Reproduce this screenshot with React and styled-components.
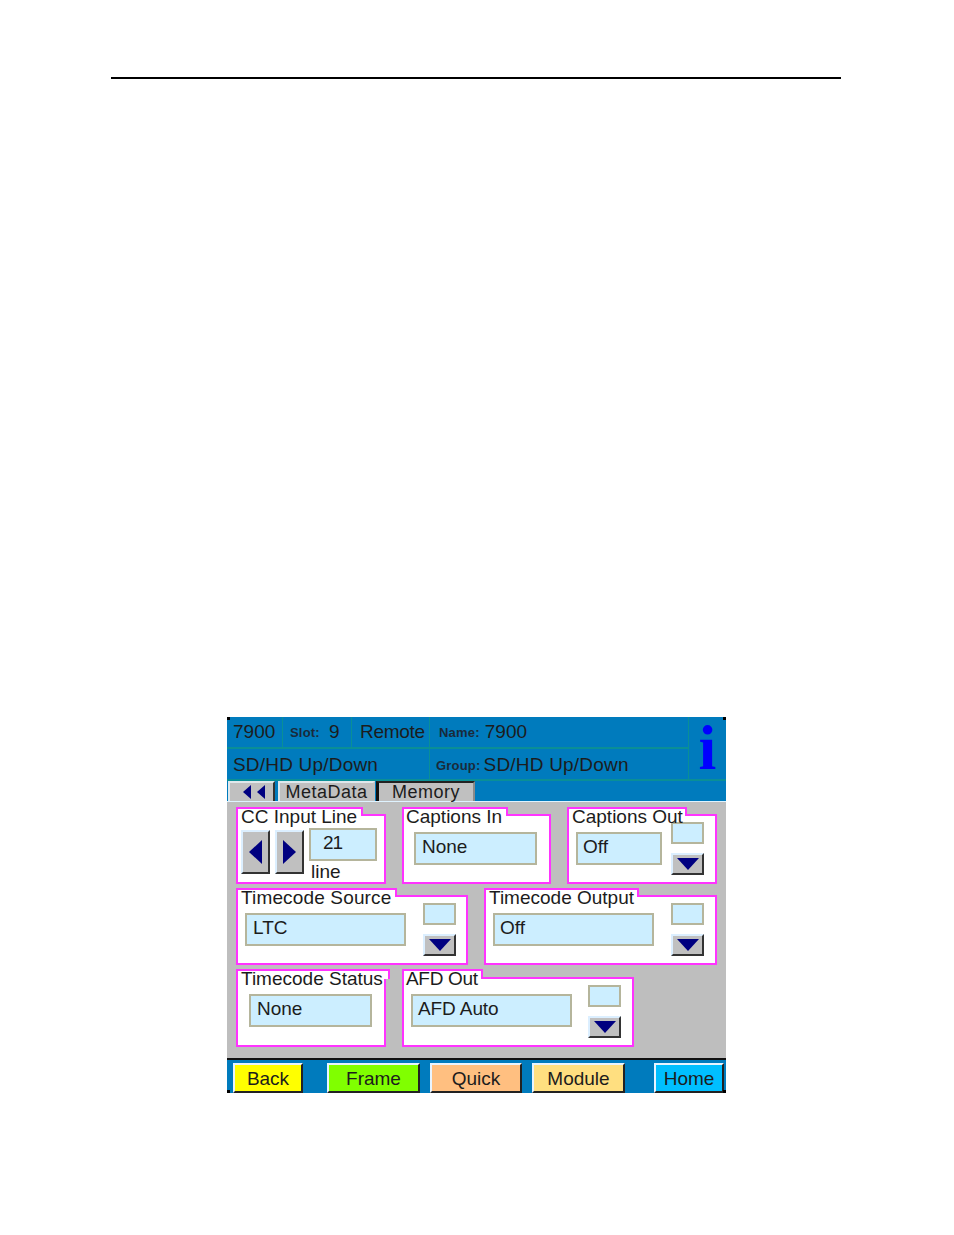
import React from "react";
import styled, { createGlobalStyle } from "styled-components";

const Global = createGlobalStyle`
  html, body {
    margin: 0;
    background: #fff;
    font-family: "Liberation Sans", Arial, sans-serif;
    color: #1c1c1c;
  }
`;

const Page = styled.div`
  width: 954px;
  height: 1235px;
  padding-top: 77px;
  box-sizing: border-box;
  overflow: hidden;
`;

const Rule = styled.hr`
  width: 730px;
  height: 2px;
  margin: 0 0 638px 111px;
  border: none;
  background: #000;
`;

const Panel = styled.div`
  position: relative;
  width: 499px;
  height: 376px;
  margin-left: 227px;
  display: flex;
  flex-direction: column;
  background: #007bbd;
`;

const Corner = styled.span`
  position: absolute;
  width: 3px;
  height: 3px;
  background: #000;
  ${(p) => (p.$at === "tr" ? "top: 0; right: 0;" : "")}
  ${(p) => (p.$at === "tl" ? "top: 0; left: 0;" : "")}
  ${(p) => (p.$at === "bl" ? "bottom: 0; left: 0;" : "")}
  ${(p) => (p.$at === "br" ? "bottom: 0; right: 0;" : "")}
`;

const Header = styled.div`
  display: grid;
  grid-template-columns: 56px 69px 78px 259px 37px;
  grid-template-rows: 32px 32px;
`;

const Cell = styled.div`
  grid-column: ${(p) => p.$span || "auto"};
  grid-row: ${(p) => p.$row || "auto"};
  display: flex;
  align-items: center;
  padding-left: ${(p) => p.$inset || 6}px;
  padding-top: ${(p) => (p.$row ? 1 : 0)}px;
  padding-bottom: ${(p) => (p.$row ? 0 : 1)}px;
  box-sizing: border-box;
  border-right: 1px solid #0a8f96;
  border-bottom: 2px solid #0a8f96;
  font-size: 19px;
  letter-spacing: ${(p) => p.$track || 0}px;
  white-space: nowrap;
`;

const Small = styled.span`
  font-size: 13px;
  font-weight: 700;
  letter-spacing: 0.2px;
  margin-right: ${(p) => p.$gap || 3}px;
  margin-top: 2px;
  color: #1a2a3a;
`;

const InfoCell = styled.div`
  grid-column: 5;
  grid-row: 1 / span 2;
  display: flex;
  justify-content: center;
  align-items: center;
  border-bottom: 2px solid #0a8f96;
  font-family: "Liberation Serif", serif;
  font-weight: 700;
  font-size: 64px;
  line-height: 1;
  color: #0000ff;
`;

const TabBar = styled.div`
  height: 21px;
  display: flex;
  align-items: flex-start;
  padding-left: 1px;
  box-sizing: border-box;
  border-bottom: 1px solid #dff3ff;
`;

const Tab = styled.button`
  width: ${(p) => p.$w}px;
  margin-right: ${(p) => p.$gap}px;
  height: 20px;
  padding: 0 0 0 ${(p) => p.$pad || 0}px;
  display: flex;
  align-items: center;
  justify-content: center;
  gap: 6px;
  box-sizing: border-box;
  border: none;
  border-left: ${(p) => (p.$active ? "3px solid #111" : "2px solid #dfe8ec")};
  border-top: 2px solid ${(p) => (p.$active ? "#222" : "#dfe8ec")};
  border-right: 2px solid ${(p) => p.$edge || "#c0c0c0"};
  background: #c0c0c0;
  font-family: inherit;
  font-size: 18px;
  letter-spacing: 0.5px;
  color: #1c1c1c;
`;

const Content = styled.div`
  flex: 1;
  background: #bebebe;
  padding: 5px 0 0 9px;
  display: flex;
  flex-direction: column;
  gap: 4px;
`;

const Row = styled.div`
  display: flex;
  gap: 16px;
`;

const Group = styled.section`
  width: ${(p) => p.$w}px;
  display: flex;
  flex-direction: column;
`;

const Legend = styled.h3`
  position: relative;
  z-index: 1;
  width: ${(p) => p.$w}px;
  height: ${(p) => (p.$tall ? 10 : 9)}px;
  margin: 0 0 -2px;
  box-sizing: border-box;
  background: #fff;
  border: 2px solid #ff33ff;
  border-bottom: none;
  font-weight: 400;
  font-size: 19px;
  line-height: 16px;
  padding-left: ${(p) => p.$pad || 3}px;
  letter-spacing: ${(p) => p.$track || 0}px;
  white-space: nowrap;
`;

const Body = styled.div`
  position: relative;
  height: 70px;
  box-sizing: border-box;
  background: #fff;
  border: 2px solid #ff33ff;
  display: flex;
  align-items: flex-start;
  padding-left: ${(p) => p.$inset}px;
`;

const Field = styled.div`
  width: ${(p) => p.$w}px;
  height: 33px;
  margin-top: ${(p) => (p.$top === undefined ? 16 : p.$top)}px;
  box-sizing: border-box;
  background: #cceeff;
  border: 2px solid #b5b59c;
  padding-left: ${(p) => p.$pad || 6}px;
  font-size: 19px;
  line-height: 26px;
  letter-spacing: ${(p) => p.$track || 0}px;
`;

const Stepper = styled.div`
  margin-left: auto;
  margin-right: ${(p) => p.$right || 11}px;
  margin-top: 6px;
  display: flex;
  flex-direction: column;
  gap: 9px;
`;

const Swatch = styled.div`
  width: 33px;
  height: 22px;
  box-sizing: border-box;
  background: #cceeff;
  border: 2px solid #b5b59c;
`;

const Bevel = styled.button`
  width: ${(p) => p.$w}px;
  height: ${(p) => p.$h}px;
  padding: 0;
  display: flex;
  align-items: center;
  justify-content: center;
  box-sizing: border-box;
  border: 2px solid;
  border-color: #dcefff #333 #333 #dcefff;
  background: #c0c0c0;
`;

const Spin = styled.div`
  display: flex;
  gap: 5px;
  margin-left: 3px;
  margin-top: 14px;
`;

const LineColumn = styled.div`
  margin-left: 5px;
  margin-top: 12px;
  display: flex;
  flex-direction: column;
  font-size: 19px;
`;

const LineLabel = styled.span`
  padding-left: 2px;
  line-height: 21px;
`;

const Footer = styled.div`
  height: 35px;
  box-sizing: border-box;
  border-top: 2px solid #111;
  padding: 3px 0 0 6px;
  display: flex;
  background: #007bbd;
`;

const NavButton = styled.button`
  width: ${(p) => p.$w}px;
  margin-right: ${(p) => p.$gap || 0}px;
  height: 30px;
  padding: 1px 0 0;
  box-sizing: border-box;
  border: 2px solid;
  border-color: #e8f4ff #222 #222 #e8f4ff;
  background: ${(p) => p.$color};
  font-family: inherit;
  font-size: 19px;
  color: #1c1c1c;
`;

const Triangle = ({ dir, w, h }) => {
  const points = {
    left: `${w},0 ${w},${h} 0,${h / 2}`,
    right: `0,0 0,${h} ${w},${h / 2}`,
    down: `0,0 ${w},0 ${w / 2},${h}`,
  };
  return (
    <svg width={w} height={h} viewBox={`0 0 ${w} ${h}`}>
      <polygon points={points[dir]} fill="#000080" />
    </svg>
  );
};

const Arrows = ({ right }) => (
  <Stepper $right={right}>
    <Swatch />
    <Bevel $w={33} $h={22}>
      <Triangle dir="down" w={22} h={12} />
    </Bevel>
  </Stepper>
);

export default function App() {
  return (
    <Page>
      <Global />
      <Rule />
      <Panel>
        <Corner $at="tl" />
        <Corner $at="tr" />
        <Corner $at="bl" />
        <Corner $at="br" />
        <Header>
          <Cell>7900</Cell>
          <Cell $inset={7}>
            <Small $gap={9}>Slot:</Small>9
          </Cell>
          <Cell $inset={8} $track={-0.3}>Remote</Cell>
          <Cell $inset={9}>
            <Small $gap={5}>Name:</Small>7900
          </Cell>
          <InfoCell>i</InfoCell>
          <Cell $span="1 / span 3" $row="2" $track={0.2}>
            SD/HD Up/Down
          </Cell>
          <Cell $row="2" $inset={6} $track={0.2}>
            <Small>Group:</Small>SD/HD Up/Down
          </Cell>
        </Header>
        <TabBar>
          <Tab $w={47} $gap={3} $pad={5} $edge="#333">
            <Triangle dir="left" w={8} h={14} />
            <Triangle dir="left" w={8} h={14} />
          </Tab>
          <Tab $w={97} $gap={1}>MetaData</Tab>
          <Tab $w={99} $gap={0} $edge="#8a8a8a" $active>Memory</Tab>
        </TabBar>
        <Content>
          <Row>
            <Group $w={150}>
              <Legend $w={127}>CC Input Line</Legend>
              <Body $inset={0}>
                <Spin>
                  <Bevel $w={29} $h={44}>
                    <Triangle dir="left" w={13} h={24} />
                  </Bevel>
                  <Bevel $w={29} $h={44}>
                    <Triangle dir="right" w={13} h={24} />
                  </Bevel>
                </Spin>
                <LineColumn>
                  <Field $w={68} $top={0} $pad={12} $track={-1}>21</Field>
                  <LineLabel>line</LineLabel>
                </LineColumn>
              </Body>
            </Group>
            <Group $w={149}>
              <Legend $w={106} $pad={2}>Captions In</Legend>
              <Body $inset={10}>
                <Field $w={123}>None</Field>
              </Body>
            </Group>
            <Group $w={150}>
              <Legend $w={120}>Captions Out</Legend>
              <Body $inset={7}>
                <Field $w={86} $pad={5}>Off</Field>
                <Arrows />
              </Body>
            </Group>
          </Row>
          <Row>
            <Group $w={232}>
              <Legend $w={161} $track={0.15}>Timecode Source</Legend>
              <Body $inset={7}>
                <Field $w={161}>LTC</Field>
                <Arrows right={10} />
              </Body>
            </Group>
            <Group $w={233}>
              <Legend $w={155}>Timecode Output</Legend>
              <Body $inset={7}>
                <Field $w={161} $pad={5}>Off</Field>
                <Arrows />
              </Body>
            </Group>
          </Row>
          <Row>
            <Group $w={150}>
              <Legend $w={154} $tall>Timecode Status</Legend>
              <Body $inset={11}>
                <Field $w={123} $top={15}>None</Field>
              </Body>
            </Group>
            <Group $w={232}>
              <Legend $w={81} $tall $pad={2} $track={-0.3}>AFD Out</Legend>
              <Body $inset={7}>
                <Field $w={161} $top={15} $pad={5} $track={-0.1}>AFD Auto</Field>
                <Arrows />
              </Body>
            </Group>
          </Row>
        </Content>
        <Footer>
          <NavButton $w={70} $gap={24} $color="#ffff00">Back</NavButton>
          <NavButton $w={93} $gap={10} $color="#80ff00">Frame</NavButton>
          <NavButton $w={92} $gap={10} $color="#ffbf80">Quick</NavButton>
          <NavButton $w={93} $gap={29} $color="#ffdf80">Module</NavButton>
          <NavButton $w={70} $color="#00bfff">Home</NavButton>
        </Footer>
      </Panel>
    </Page>
  );
}
